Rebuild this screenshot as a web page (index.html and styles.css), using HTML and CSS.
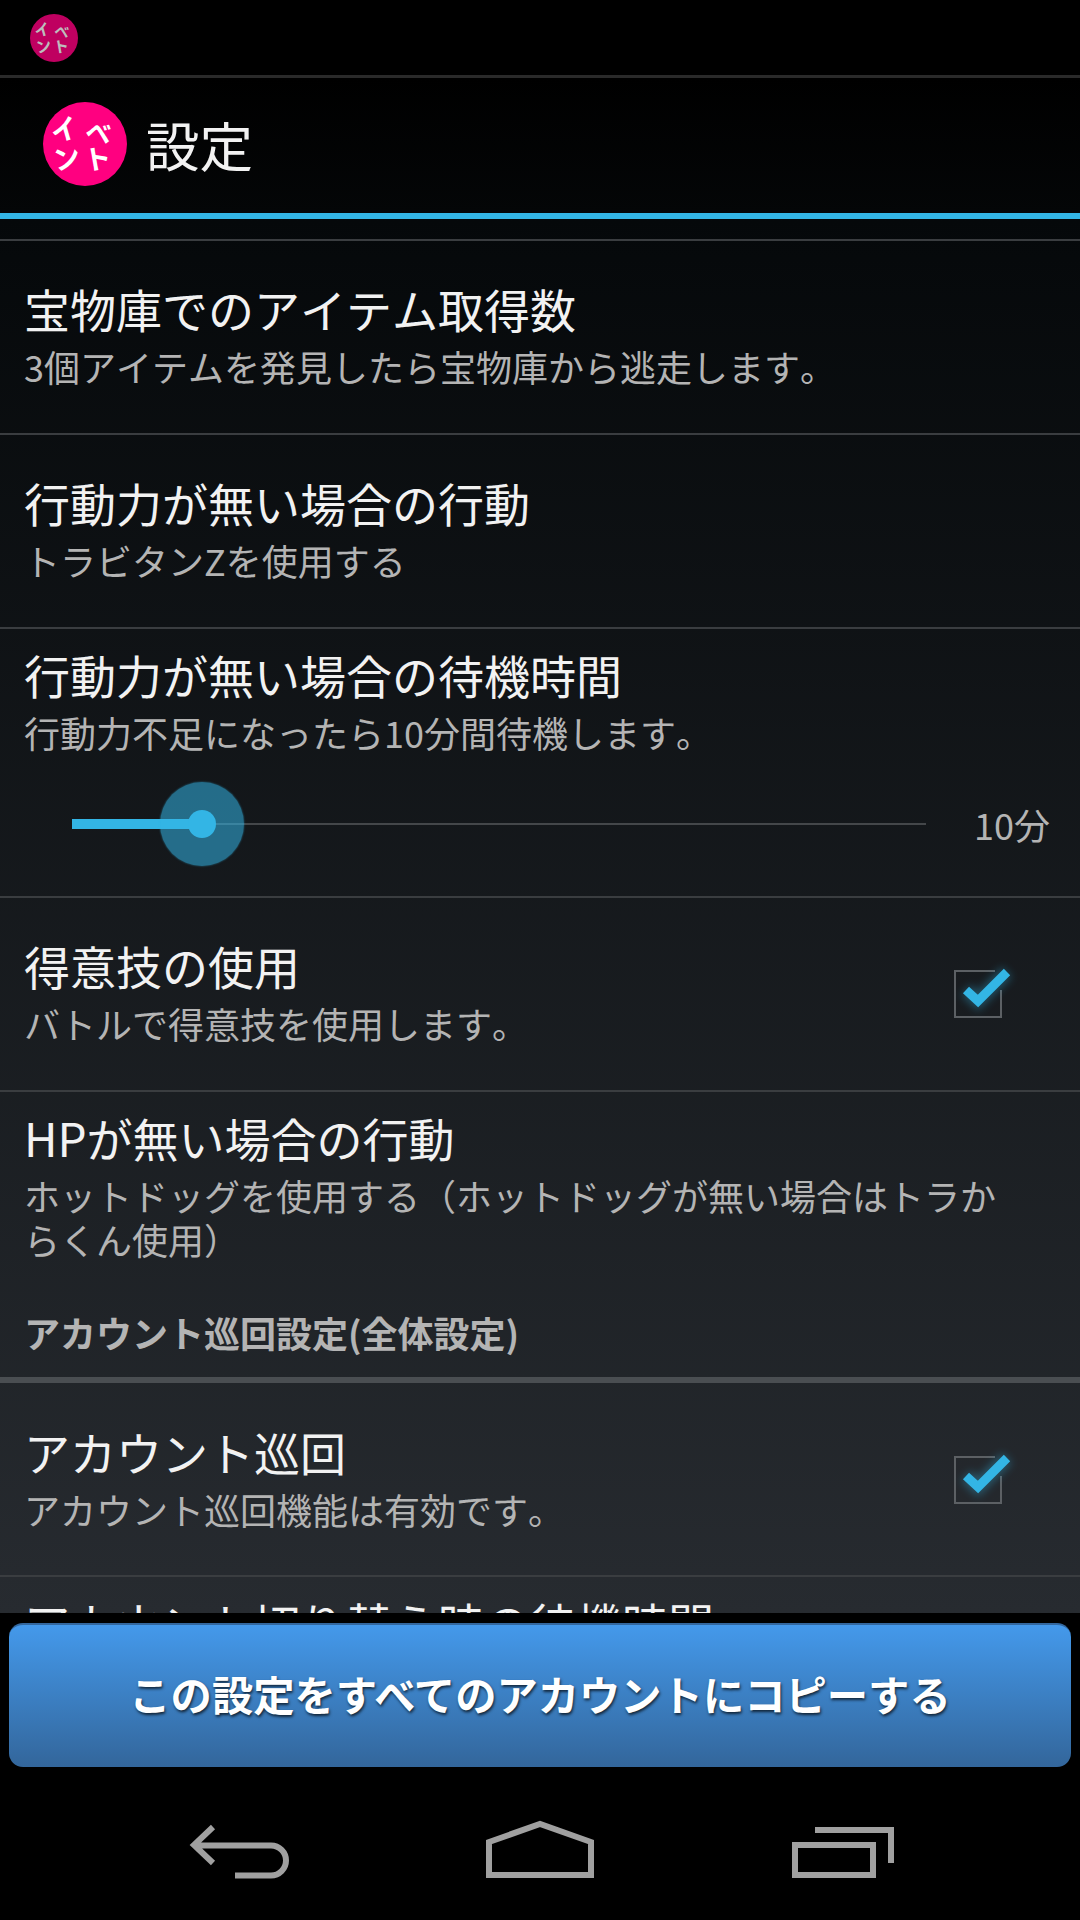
FILE: index.html
```html
<!DOCTYPE html>
<html lang="ja">
<head>
    <meta charset="UTF-8">
    <meta name="viewport" content="width=device-width, initial-scale=1.0">
    <title>設定</title>
    <link rel="stylesheet" href="styles.css">
</head>
<body>
    <div id="app">
        <div id="status-bar">
            <svg class="logo logo-small" viewBox="0 0 84 84">
                <circle cx="42" cy="42" r="42"/>
                <text transform="translate(11 41) rotate(-16)" font-size="27">イ</text>
                <text transform="translate(41 38) rotate(10)" font-size="26">ベ</text>
                <text transform="translate(13 69) rotate(-14)" font-size="27">ン</text>
                <text transform="translate(43 69) rotate(-10)" font-size="27">ト</text>
            </svg>
        </div>

        <div id="action-bar">
            <svg class="logo logo-big" viewBox="0 0 84 84">
                <circle cx="42" cy="42" r="42"/>
                <text transform="translate(11 41) rotate(-16)" font-size="27">イ</text>
                <text transform="translate(41 38) rotate(10)" font-size="26">ベ</text>
                <text transform="translate(13 69) rotate(-14)" font-size="27">ン</text>
                <text transform="translate(43 69) rotate(-10)" font-size="27">ト</text>
            </svg>
            <span id="page-title">設定</span>
        </div>

        <div id="settings-list">
            <div class="row">
                <div class="row-text">
                    <div class="row-title">宝物庫でのアイテム取得数</div>
                    <div class="row-sub">3個アイテムを発見したら宝物庫から逃走します。</div>
                </div>
            </div>

            <div class="row">
                <div class="row-text">
                    <div class="row-title">行動力が無い場合の行動</div>
                    <div class="row-sub">トラビタンZを使用する</div>
                </div>
            </div>

            <div class="row row-slider">
                <div class="row-title">行動力が無い場合の待機時間</div>
                <div class="row-sub">行動力不足になったら10分間待機します。</div>
                <div class="slider">
                    <div class="track">
                        <div class="track-fill"></div>
                        <div class="thumb"><div class="thumb-core"></div></div>
                    </div>
                    <span class="slider-value">10分</span>
                </div>
            </div>

            <div class="row">
                <div class="row-text">
                    <div class="row-title">得意技の使用</div>
                    <div class="row-sub">バトルで得意技を使用します。</div>
                </div>
                <svg class="check" viewBox="0 0 80 70">
                    <path class="check-box" d="M48 10H8V56H54V29"/>
                    <path class="check-glow" d="M19 29L31 40L60 11"/>
                    <path class="check-mark" d="M19 29L31 40L60 11"/>
                </svg>
            </div>

            <div class="row row-open">
                <div class="row-text">
                    <div class="row-title">HPが無い場合の行動</div>
                    <div class="row-sub">ホットドッグを使用する（ホットドッグが無い場合はトラからくん使用）</div>
                </div>
            </div>

            <div class="section-title">アカウント巡回設定(全体設定)</div>

            <div class="row row-after-section">
                <div class="row-text">
                    <div class="row-title">アカウント巡回</div>
                    <div class="row-sub">アカウント巡回機能は有効です。</div>
                </div>
                <svg class="check" viewBox="0 0 80 70">
                    <path class="check-box" d="M48 10H8V56H54V29"/>
                    <path class="check-glow" d="M19 29L31 40L60 11"/>
                    <path class="check-mark" d="M19 29L31 40L60 11"/>
                </svg>
            </div>

            <div class="row row-slider">
                <div class="row-title">アカウント切り替え時の待機時間</div>
            </div>
        </div>

        <div id="copy-bar">
            <button id="copy-button">この設定をすべてのアカウントにコピーする</button>
        </div>

        <div id="nav-bar">
            <svg class="nav-icon" viewBox="0 0 120 60">
                <path d="M33 7L14 25L33 43M16 25.5H91A15 15 0 0 1 91 55.5H55"/>
            </svg>
            <svg class="nav-icon" viewBox="0 0 120 60">
                <path d="M9 55V22L60 4L111 22V55Z"/>
            </svg>
            <svg class="nav-icon" viewBox="0 0 120 60">
                <path d="M15 25H93V55H15Z"/>
                <path d="M35 10H111V43"/>
            </svg>
        </div>
    </div>
</body>
</html>
```

FILE: styles.css
```css
html, body {
    width: 100%;
    height: 100%;
    margin: 0;
    padding: 0;
    overflow: hidden;
}

body {
    font-family: "Noto Sans CJK JP", "Noto Sans", sans-serif;
    font-kerning: none;
    background-color: #000;
}

#app {
    display: flex;
    flex-direction: column;
    height: 1920px;
}

#status-bar {
    display: flex;
    align-items: center;
    height: 75px;
    padding-left: 30px;
    box-sizing: border-box;
    background-color: #000;
}

.logo text {
    font-family: "Noto Sans CJK JP", sans-serif;
    font-weight: 700;
}

.logo-small {
    width: 48px;
    height: 48px;
}

.logo-small circle {
    fill: #bf0060;
}

.logo-small text {
    fill: #bdbdbd;
}

.logo-big {
    width: 84px;
    height: 84px;
}

.logo-big circle {
    fill: #ff0080;
}

.logo-big text {
    fill: #fff;
}

#action-bar {
    display: flex;
    align-items: center;
    height: 144px;
    padding-left: 43px;
    padding-bottom: 4px;
    box-sizing: border-box;
    border-top: 3px solid #2a2a2a;
    border-bottom: 6px solid #33b5e5;
    background: linear-gradient(#000, #040607);
}

#page-title {
    margin-left: 19px;
    font-size: 53.5px;
    color: #f2f2f2;
}

#settings-list {
    flex: 1;
    overflow: hidden;
    padding-top: 20px;
    background: linear-gradient(#05080a, #272b30);
}

.row {
    display: flex;
    align-items: center;
    padding: 40px 0 45px 24px;
    border-top: 2px solid #3a3d40;
}

.row-after-section {
    padding: 41px 0 44px 24px;
}

.row-slider {
    display: block;
    padding: 18px 0 31px 24px;
}

.row-open {
    padding: 18px 0 0 24px;
}

.row-text {
    flex: 1;
}

.row-open .row-text {
    width: 982px;
    flex: none;
}

.row-title {
    font-size: 46px;
    line-height: 54px;
    color: #f2f2f2;
}

.row-sub {
    margin-top: 9px;
    font-size: 36px;
    line-height: 44px;
    color: #b4b4b4;
}

.section-title {
    padding: 49px 0 23px 24px;
    font-size: 36px;
    line-height: 44px;
    font-weight: 700;
    color: #b4b4b4;
    border-bottom: 6px solid #4a4e52;
}

.section-title + .row {
    border-top: none;
}

.check {
    width: 80px;
    height: 70px;
    margin-right: 53px;
    margin-top: 8px;
}

.check-box {
    fill: none;
    stroke: #5c6064;
    stroke-width: 2;
}

.check-glow {
    fill: none;
    stroke: #33b5e5;
    stroke-width: 14;
    opacity: 0.35;
    filter: blur(4px);
}

.check-mark {
    fill: none;
    stroke: #33b5e5;
    stroke-width: 9;
}

.slider {
    display: flex;
    align-items: center;
    height: 84px;
    margin-top: 28px;
    margin-bottom: -1px;
    padding-left: 48px;
}

.track {
    position: relative;
    width: 854px;
    height: 2px;
    background-color: #44474a;
}

.track-fill {
    position: absolute;
    left: 0;
    top: -4px;
    width: 130px;
    height: 10px;
    background-color: #33b5e5;
}

.thumb {
    position: absolute;
    left: 88px;
    top: -41px;
    display: flex;
    align-items: center;
    justify-content: center;
    width: 84px;
    height: 84px;
    border-radius: 50%;
    background-color: rgba(51, 181, 229, 0.55);
    box-shadow: 0 0 2px rgba(51, 181, 229, 0.6);
}

.thumb-core {
    width: 28px;
    height: 28px;
    border-radius: 50%;
    background-color: #33b5e5;
}

.slider-value {
    margin-left: 48px;
    font-size: 36px;
    color: #b4b4b4;
}

#copy-bar {
    padding: 10px 9px 0;
    background-color: #000;
}

#copy-button {
    display: block;
    width: 100%;
    height: 144px;
    padding: 0 0 6px;
    border: none;
    border-top: 2px solid #33679e;
    border-radius: 14px;
    font-family: inherit;
    font-size: 41.3px;
    font-weight: 700;
    color: #fff;
    text-shadow: 1px 2px 3px rgba(0, 0, 0, 0.7);
    background: linear-gradient(#4499eb, #33669b);
}

#nav-bar {
    display: grid;
    grid-template-columns: repeat(3, 120px);
    justify-content: space-between;
    padding: 53px 180px 40px;
    background-color: #000;
}

.nav-icon {
    width: 120px;
    height: 60px;
}

.nav-icon path {
    fill: none;
    stroke: #a0a0a0;
    stroke-width: 6;
}
```
